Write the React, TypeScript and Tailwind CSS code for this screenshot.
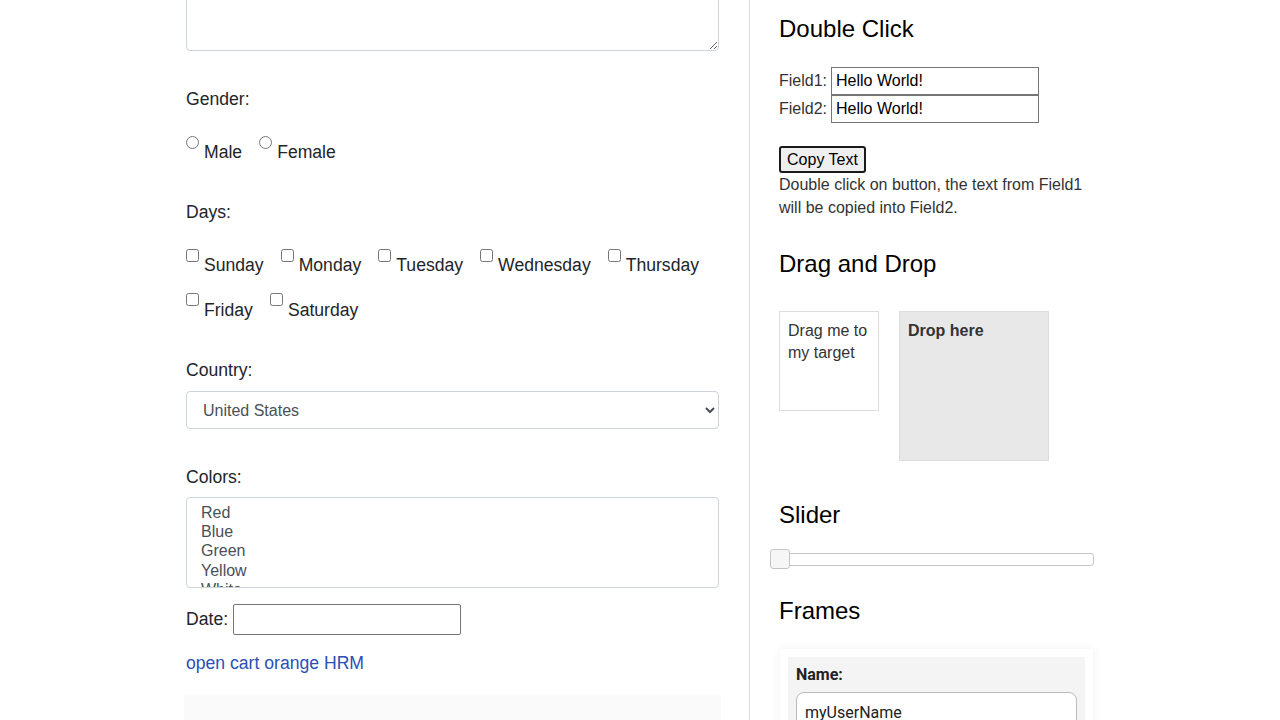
import React from "react";

const days = ["Sunday", "Monday", "Tuesday", "Wednesday", "Thursday", "Friday", "Saturday"];

export default function App() {
  return (
    <div className="w-[1280px] h-[720px] overflow-hidden bg-white flex" style={{ fontFamily: '"Liberation Sans", Arial, sans-serif' }}>
      {/* Left column */}
      <div className="ml-[184px] w-[566px] border-r border-[#dedede] shrink-0">
        <div className="w-[537px] pl-[2px] text-[#212529]">
          <textarea className="block w-[533px] h-[101px] -mt-[50px] border border-[#ced4da] rounded-[4px] resize-y" />

          <div className="mt-[35px] text-[17.6px] leading-[26px]">Gender:</div>
          <div className="mt-[27px] flex gap-x-[17px] text-[17.6px] leading-[26px]">
            <label className="flex items-start">
              <input type="radio" name="g" className="-mt-[3px] mr-[5px] w-[13px] h-[13px]" />
              Male
            </label>
            <label className="flex items-start">
              <input type="radio" name="g" className="-mt-[3px] mr-[5px] w-[13px] h-[13px]" />
              Female
            </label>
          </div>

          <div className="mt-[34px] text-[17.6px] leading-[26px]">Days:</div>
          <div className="mt-[27px] flex flex-wrap gap-x-[17px] gap-y-[19px] text-[17.6px] leading-[26px] w-[533px]">
            {days.map((d, i) => (
              <label key={d} className="flex items-start">
                <input type="checkbox" className={i < 5 ? "-mt-[3px] mr-[5px] w-[13px] h-[13px]" : "-mt-[4px] mr-[5px] w-[13px] h-[13px]"} />
                {d}
              </label>
            ))}
          </div>

          <div className="mt-[34px] text-[17.6px] leading-[26px]">Country:</div>
          <select className="mt-[8px] block w-[533px] h-[38px] border border-[#ced4da] rounded-[4px] pl-[12px] pr-[4px] text-[16px] text-[#495057] bg-white">
            <option>United States</option>
          </select>

          <div className="mt-[35px] text-[17.6px] leading-[26px]">Colors:</div>
          <select multiple className="mt-[7px] block w-[533px] h-[91px] border border-[#ced4da] rounded-[4px] pl-[14px] pr-[12px] pt-[6px] pb-[4px] text-[16px] leading-[19px] text-[#495057] overflow-hidden">
            <option>Red</option>
            <option>Blue</option>
            <option>Green</option>
            <option>Yellow</option>
            <option>White</option>
          </select>

          <div className="mt-[16px] flex items-center text-[17.6px]">
            <span className="mr-[5px]">Date:</span>
            <input type="text" className="w-[228px] h-[31px] border border-[#767676] rounded-[2px]" />
          </div>

          <div className="mt-[15px] text-[17.6px] leading-[26px] text-[#2a4fb5]">
            <a href="#" className="text-[#2a4fb5]">open cart</a> <a href="#" className="text-[#2a4fb5]">orange HRM</a>
          </div>
        </div>
        <div className="mt-[19px] w-[537px] h-[60px] bg-[#fafafa]" />
      </div>

      {/* Right column */}
      <div className="pl-[29px] text-[#333]">
        <h2 className="mt-[14px] text-[24px] leading-[29px] text-black">Double Click</h2>
        <div className="mt-[24px] text-[16px]">
          <div className="flex items-center h-[28px]">
            <span className="mr-[4px]">Field1:</span>
            <input defaultValue="Hello World!" className="w-[208px] h-[28px] border border-[#767676] px-[4px] text-black text-[16px]" />
          </div>
          <div className="flex items-center h-[28px]">
            <span className="mr-[4px]">Field2:</span>
            <input defaultValue="Hello World!" className="w-[208px] h-[28px] border border-[#767676] px-[4px] text-black text-[16px]" />
          </div>
        </div>
        <button className="mt-[23px] block w-[87px] h-[27px] border-2 border-[#1a1a1a] rounded-[3px] bg-[#efefef] text-[16px] text-black leading-none">Copy Text</button>
        <p className="text-[16px] leading-[23px] w-[310px]">Double click on button, the text from Field1 will be copied into Field2.</p>

        <h2 className="mt-[30px] text-[24px] leading-[29px] text-black">Drag and Drop</h2>
        <div className="mt-[33px] flex items-start gap-[20px]">
          <div className="w-[100px] h-[100px] border border-[#dddddd] p-[8px] text-[16px] leading-[22px] text-[#333]">Drag me to my target</div>
          <div className="w-[150px] h-[150px] border border-[#dddddd] bg-[#e8e8e8] p-[8px] text-[16px] leading-[22px] font-bold text-[#333]">Drop here</div>
        </div>

        <h2 className="mt-[39px] text-[24px] leading-[29px] text-black">Slider</h2>
        <div className="mt-[24px] -ml-[9px] relative w-[324px] h-[13px] border border-[#c5c5c5] rounded-[3px] bg-white">
          <div className="absolute -left-[1px] -top-[5px] w-[20px] h-[20px] border border-[#c5c5c5] rounded-[3px] bg-[#f6f6f6]" />
        </div>

        <h2 className="mt-[30px] text-[24px] leading-[29px] text-black">Frames</h2>
        <div className="mt-[24px] ml-[1px] w-[313px] px-[8px] pt-[8px] shadow-[0_0_10px_rgba(0,0,0,0.06)]" style={{ fontFamily: 'Roboto, "Noto Sans", sans-serif' }}>
          <div className="bg-[#f4f4f4] px-[8px] pt-[8px] h-[80px]">
            <div className="font-bold text-[16px] leading-[20px] text-[#222]">Name:</div>
            <input defaultValue="myUserName" className="mt-[7px] w-[281px] h-[40px] border border-[#bbbbbb] rounded-[8px] px-[8px] text-[16px] text-[#222] bg-white" />
          </div>
        </div>
      </div>
    </div>
  );
}
